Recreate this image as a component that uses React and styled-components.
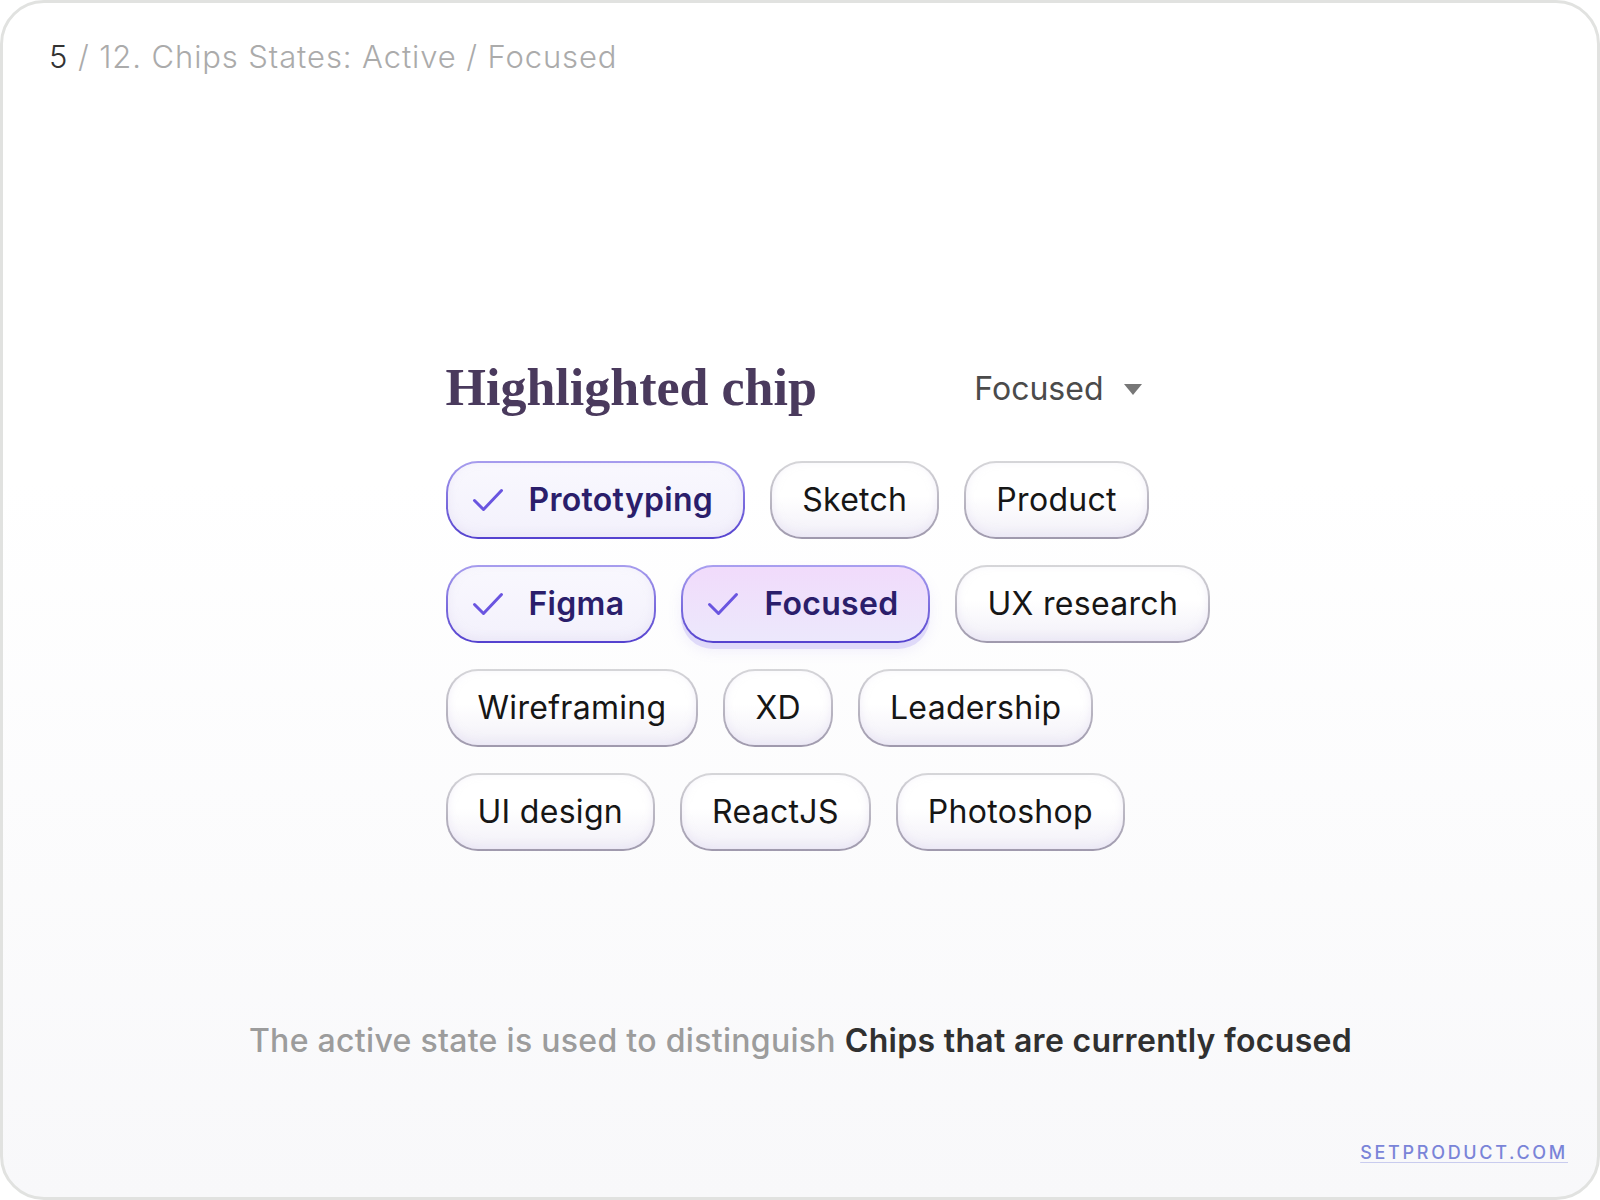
import React from 'react';
import styled, { createGlobalStyle } from 'styled-components';

const GlobalStyle = createGlobalStyle`
    html, body {
        margin: 0;
        padding: 0;
        background: #ffffff;
    }
    * {
        box-sizing: border-box;
    }
`;

const rows = [
    [
        { label: 'Prototyping', selected: true },
        { label: 'Sketch' },
        { label: 'Product' }
    ],
    [
        { label: 'Figma', selected: true },
        { label: 'Focused', selected: true, focused: true },
        { label: 'UX research' }
    ],
    [{ label: 'Wireframing' }, { label: 'XD' }, { label: 'Leadership' }],
    [{ label: 'UI design' }, { label: 'ReactJS' }, { label: 'Photoshop' }]
];

const Card = styled.div`
    width: 1600px;
    height: 1200px;
    border: 3px solid #e1e2e0;
    border-radius: 44px;
    background: linear-gradient(180deg, #ffffff 0%, #ffffff 40%, #f8f8fa 100%);
    padding: 37px 29px 0 46px;
    display: flex;
    flex-flow: column nowrap;
    font-family: 'Inter', 'Noto Sans', sans-serif;
    overflow: hidden;
`;

const Breadcrumb = styled.div`
    font-size: 31px;
    line-height: 34px;
    font-weight: 300;
    color: #ababab;
    letter-spacing: 0.9px;

    span {
        color: #333333;
    }
`;

const Main = styled.div`
    width: 710px;
    margin: 286px auto 0;
    /* card padding is uneven, shift back to page centre */
    position: relative;
    left: -8px;
`;

const HeadingRow = styled.div`
    display: flex;
    flex-flow: row nowrap;
    align-items: center;
    height: 56px;
    padding-right: 14px;
`;

const Heading = styled.h2`
    margin: 0;
    font-family: 'Liberation Serif', 'DejaVu Serif', serif;
    font-weight: 700;
    font-size: 52px;
    line-height: 56px;
    color: #4a3a5d;
    white-space: nowrap;
`;

const Dropdown = styled.div`
    margin-left: auto;
    display: flex;
    align-items: center;
    gap: 20px;
    font-size: 32px;
    color: #4b4b4b;
    cursor: pointer;
`;

const Caret = styled.span`
    width: 0;
    height: 0;
    border-left: 9px solid transparent;
    border-right: 9px solid transparent;
    border-top: 11px solid #777777;
    margin-top: 2px;
`;

const ChipGrid = styled.div`
    margin-top: 45px;
    display: flex;
    flex-flow: column nowrap;
    gap: 26px;
`;

const ChipRow = styled.div`
    display: flex;
    flex-flow: row nowrap;
    gap: 25px;
`;

const Chip = styled.button`
    flex: 0 0 auto;
    display: flex;
    align-items: center;
    gap: 25px;
    height: 78px;
    padding: 0 30px 0 ${props => (props.$selected ? 24 : 30)}px;
    border: 2px solid transparent;
    border-radius: 32px;
    font-family: 'Inter', 'Noto Sans', sans-serif;
    font-size: 32px;
    line-height: 40px;
    letter-spacing: 0.3px;
    white-space: nowrap;
    font-weight: ${props => (props.$selected ? 600 : 400)};
    color: ${props => (props.$selected ? '#2b1e6b' : '#161616')};
    cursor: pointer;
    background: ${props =>
        props.$focused
            ? 'linear-gradient(180deg, #f1dbfb 0%, #ece8fc 100%) padding-box, linear-gradient(180deg, #a99ff0 0%, #5442cf 100%) border-box'
            : props.$selected
            ? 'linear-gradient(180deg, #f9f8fe 0%, #f3f1fc 100%) padding-box, linear-gradient(180deg, #a79dee 0%, #5441cf 100%) border-box'
            : 'linear-gradient(180deg, #ffffff 0%, #ffffff 45%, #f2f0f8 100%) padding-box, linear-gradient(180deg, #d6d6d9 0%, #9f99ad 100%) border-box'};
    box-shadow: ${props =>
        props.$focused
            ? '0 6px 0 0 rgba(214, 206, 248, 0.7), 0 8px 14px rgba(150, 130, 230, 0.12)'
            : 'inset 0 -3px 8px rgba(225, 220, 242, 0.5)'};
`;

const Check = () => (
    <svg width="32" height="26" viewBox="0 0 32 26" fill="none">
        <path
            d="M2.5 13.5 L11.5 22.5 L29.5 3.5"
            stroke="#6a55e0"
            strokeWidth="3"
            strokeLinecap="round"
            strokeLinejoin="round"
        />
    </svg>
);

const Caption = styled.p`
    margin: 170px 0 0;
    text-align: center;
    font-size: 32px;
    line-height: 40px;
    font-weight: 500;
    color: #9c9c9c;
    letter-spacing: 0.3px;
    white-space: nowrap;
    position: relative;
    left: -8px;

    strong {
        font-weight: 600;
        color: #303030;
    }
`;

const Brand = styled.a`
    align-self: flex-end;
    margin-top: 80px;
    font-size: 18px;
    line-height: 24px;
    font-weight: 500;
    letter-spacing: 2.7px;
    color: #7a84d8;
    text-decoration: underline;
    text-decoration-color: #c9ccef;
    text-underline-offset: 3px;
`;

const App = () => {
    return (
        <>
            <GlobalStyle />
            <Card>
                <Breadcrumb>
                    <span>5</span> / 12. Chips States: Active / Focused
                </Breadcrumb>
                <Main>
                    <HeadingRow>
                        <Heading>Highlighted chip</Heading>
                        <Dropdown>
                            Focused
                            <Caret />
                        </Dropdown>
                    </HeadingRow>
                    <ChipGrid>
                        {rows.map((row, i) => (
                            <ChipRow key={i}>
                                {row.map(chip => (
                                    <Chip
                                        key={chip.label}
                                        $selected={chip.selected}
                                        $focused={chip.focused}
                                    >
                                        {chip.selected && <Check />}
                                        {chip.label}
                                    </Chip>
                                ))}
                            </ChipRow>
                        ))}
                    </ChipGrid>
                </Main>
                <Caption>
                    The active state is used to distinguish{' '}
                    <strong>Chips that are currently focused</strong>
                </Caption>
                <Brand>SETPRODUCT.COM</Brand>
            </Card>
        </>
    );
};

export default App;
